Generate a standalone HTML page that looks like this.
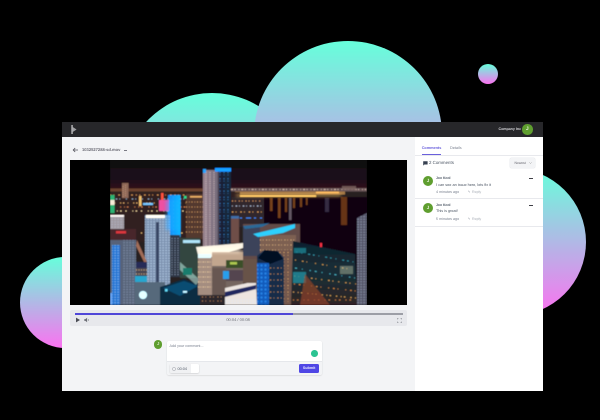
<!DOCTYPE html>
<html><head><meta charset="utf-8"><style>
html,body{margin:0;padding:0;background:#000;width:600px;height:420px;overflow:hidden;font-family:"Liberation Sans",sans-serif;text-rendering:geometricPrecision}
.a{position:absolute;white-space:nowrap}
.t{line-height:6px;height:6px}
.av{position:absolute;border-radius:50%;background:#5f9e2f;color:#e8f3dc;text-align:center;font-weight:bold}
</style></head><body>
<svg class="a" style="left:0;top:0" width="600" height="420" viewBox="0 0 600 420">
<defs>
<linearGradient id="g" x1="0" y1="0" x2="0" y2="1"><stop offset="0" stop-color="#66ffdb"/><stop offset="1" stop-color="#fb72f0"/></linearGradient>
</defs>
<circle cx="212" cy="182.4" r="89.4" fill="url(#g)"/>
<circle cx="348" cy="135" r="94" fill="url(#g)"/>
<circle cx="488" cy="74" r="10" fill="url(#g)"/>
<circle cx="65.6" cy="302.5" r="45.6" fill="url(#g)"/>
<circle cx="512.3" cy="242" r="73.7" fill="url(#g)"/>
</svg>

<div class="a" style="left:62px;top:122px;width:481px;height:269px;background:#fff"></div>
<div class="a" style="left:62px;top:137px;width:353px;height:254px;background:#f3f4f6"></div>
<div class="a" style="left:62px;top:122px;width:481px;height:15px;background:#27272a"></div>

<svg class="a" style="left:70px;top:124px" width="10" height="11" viewBox="0 0 10 11"><path d="M1.4 1h1.3v9H1.4z" fill="#c9c9cb"/><path d="M2.7 3 6.6 5.5 2.7 8z" fill="#a0a0a3"/></svg>
<div class="a t" style="left:498.5px;top:126px;font-size:3.6px;font-weight:bold;color:#d8d8dc">Company Inc</div>
<div class="av" style="left:522px;top:124px;width:10.5px;height:10.5px;font-size:5px;line-height:10.5px">J</div>

<svg class="a" style="left:72px;top:147px" width="7" height="6" viewBox="0 0 7 6"><path d="M6 3H1.2M3.2 1 1.2 3l2 2" stroke="#52525b" stroke-width=".8" fill="none"/></svg>
<div class="a t" style="left:82px;top:147px;font-size:4.1px;color:#6b6b75;font-weight:bold">1032527288-sd.mov</div>
<div class="a" style="left:123.5px;top:149.5px;width:3.5px;height:.8px;background:#7a7a84"></div>

<!-- player -->
<div class="a" style="left:70px;top:160px;width:337px;height:145px;background:#000"></div>
<svg class="a" style="left:110px;top:160px;filter:brightness(1.14) saturate(1.1)" width="257" height="145" viewBox="110 160 257 145">
<defs>
<filter id="b" x="-5%" y="-5%" width="110%" height="110%"><feGaussianBlur stdDeviation=".6"/></filter>
<filter id="b2" x="-20%" y="-20%" width="140%" height="140%"><feGaussianBlur stdDeviation="1.5"/></filter>
<linearGradient id="sky" x1="0" y1="0" x2="0" y2="1"><stop offset="0" stop-color="#0c0710"/><stop offset=".7" stop-color="#1a0a14"/><stop offset="1" stop-color="#2a1016"/></linearGradient>
<linearGradient id="blue" x1="0" y1="0" x2="1" y2="0"><stop offset="0" stop-color="#1f76c8"/><stop offset="1" stop-color="#12a0e0"/></linearGradient>
<linearGradient id="twr" x1="0" y1="0" x2="1" y2="0"><stop offset="0" stop-color="#87757e"/><stop offset=".5" stop-color="#68606c"/><stop offset=".6" stop-color="#1a1c2c"/><stop offset="1" stop-color="#182434"/></linearGradient>
<linearGradient id="glass" x1="0" y1="0" x2="0" y2="1"><stop offset="0" stop-color="#101e28"/><stop offset=".5" stop-color="#14282f"/><stop offset="1" stop-color="#2a1f20"/></linearGradient>
<pattern id="w2" width="3" height="2.6" patternUnits="userSpaceOnUse"><rect x=".3" y=".3" width="1.6" height="1.2" fill="#bcd0e6"/></pattern>
<pattern id="w4" width="4" height="4" patternUnits="userSpaceOnUse"><rect x=".5" y=".5" width="2" height="2" fill="#2f8fe0"/></pattern>
</defs>
<g filter="url(#b)">
<rect x="110" y="160" width="257" height="145" fill="#231a1e"/>
<rect x="110" y="160" width="257" height="29" fill="url(#sky)"/>
<!-- water -->
<rect x="262" y="197" width="105" height="60" fill="#0b0510"/>
<path d="M300 241 345 250 358 250 367 213V300H300z" fill="#0b0510"/>
<!-- skyline -->
<rect x="110" y="188.5" width="95" height="3" fill="#5c3a2a"/>
<rect x="231" y="188" width="136" height="3.5" fill="#5a4a4c"/>
<rect x="235" y="191.5" width="110" height="3" fill="#8d6a42"/>
<path d="M231 189.5H366" stroke="#e0c8b8" stroke-width=".8" stroke-dasharray="2 1.5 1 3 .8 2"/>
<path d="M236 196H316" stroke="#f4c46c" stroke-width="1.6"/>
<path d="M316 192.5H339" stroke="#eab060" stroke-width="1.6"/>
<rect x="342" y="186" width="14" height="4" fill="#6e5a58" opacity=".8"/>
<!-- reflections -->
<g fill="#b0662a" opacity=".55">
<rect x="270" y="198" width="2.5" height="13"/><rect x="278" y="198" width="2.5" height="20"/><rect x="285" y="198" width="2" height="14"/>
<rect x="293" y="198" width="2" height="10"/><rect x="300" y="198" width="2" height="9"/><rect x="306" y="198" width="1.5" height="7"/>
</g>
<rect x="289" y="198" width="2.5" height="22" fill="#8a7e86" opacity=".6"/>
<rect x="341" y="197" width="6" height="28" fill="#8a4a1c" opacity=".6"/>
<rect x="325" y="198" width="4" height="14" fill="#3c3448" opacity=".7"/>
<!-- mid-city fill -->
<rect x="110" y="192" width="130" height="50" fill="#2b1e1f"/>
<rect x="232" y="197" width="32" height="30" fill="#2c2226"/>
<g fill="none" stroke-width=".9">
<path d="M110 195H200" stroke="#c89058" stroke-dasharray="1 2.6 .7 4 1.6 3"/>
<path d="M110 199H200" stroke="#8fa8c0" stroke-dasharray=".8 5 1.4 2.2 .6 6"/>
<path d="M110 203H200" stroke="#e0b070" stroke-dasharray="1.2 3.4 .6 5 .9 2"/>
<path d="M110 207H200" stroke="#c07850" stroke-dasharray=".7 2 1.5 6 .8 3.2"/>
<path d="M110 211H200" stroke="#e8d0a0" stroke-dasharray="1 6 .7 2.5 1.3 4"/>
<path d="M110 233H240" stroke="#e0b878" stroke-dasharray="1 3 .7 4.4 1.4 5"/>
<path d="M232 201H262" stroke="#c89060" stroke-dasharray="1 2 .8 3"/>
<path d="M232 206H262" stroke="#a8b4c8" stroke-dasharray=".7 3 1.4 2"/>
<path d="M232 212H262" stroke="#d8a060" stroke-dasharray="1.3 2.4 .7 4"/>
<path d="M232 218H262" stroke="#3c7cd8" stroke-dasharray="5 3 2 4"/>
</g>
<rect x="122" y="183" width="6.5" height="15" fill="#7a5c50"/>
<path d="M123 186V197M125.5 185V197" stroke="#c8a080" stroke-width=".5" stroke-dasharray="1 1"/>
<rect x="110" y="195" width="4.5" height="18" fill="#2f9a68"/>
<rect x="110" y="200" width="4.5" height="5" fill="#d8d0c0"/>
<rect x="139" y="196" width="2.5" height="10" fill="#d0a868"/>
<rect x="143" y="203" width="10" height="2" fill="#6fb0e0"/>
<rect x="186" y="194" width="17" height="45" fill="#46302a"/>
<rect x="190" y="196" width="12" height="1.6" fill="#cf9d60"/>
<path d="M186 202H203M186 207H203M186 212H203M186 217H203M186 222H203M186 227H203M186 232H203" stroke="#d8a468" stroke-width=".8" stroke-dasharray="1 2 .7 1.8"/>
<!-- blue tower -->
<rect x="168" y="195" width="12.5" height="42" fill="url(#blue)"/>
<rect x="168" y="195" width="12.5" height="42" fill="url(#w4)" opacity=".3"/>
<rect x="159" y="200" width="10" height="11" fill="#c8488a"/>
<rect x="161" y="193" width="2.5" height="7" fill="#d84c3a"/>
<rect x="184" y="196" width="2.5" height="2.5" fill="#30c080"/>
<!-- main tower -->
<rect x="203" y="170" width="28" height="79" fill="url(#twr)"/>
<path d="M206 172V248M210 172V248M214 172V248" stroke="#c0b0b0" stroke-width=".7" stroke-dasharray="1.2 1"/>
<path d="M220 172V248M224 172V248M228 172V248" stroke="#3a80c0" stroke-width=".8" stroke-dasharray="1 1.6 .6 3"/>
<rect x="215" y="168" width="16" height="3.6" fill="#1c8cf0"/>
<rect x="203" y="169" width="3" height="4" fill="#2a90d8"/>
<rect x="231" y="216" width="8" height="27" fill="#5f443f"/>
<rect x="231" y="216" width="8" height="2.6" fill="#3a6090"/>
<!-- low left -->
<rect x="110" y="215" width="14" height="15" fill="#8c868c"/>
<rect x="110" y="215" width="14" height="1.8" fill="#ece4e0"/>
<rect x="110" y="215" width="14" height="15" fill="url(#w2)" opacity=".3"/>
<rect x="110" y="229" width="26" height="11" fill="#3e2228"/>
<rect x="116" y="231" width="10" height="2.5" fill="#b83038"/>
<!-- left tower 2 -->
<rect x="145" y="215" width="25" height="70" fill="#6e7f96"/>
<rect x="145" y="215" width="25" height="70" fill="url(#w2)" opacity=".6"/>
<rect x="156" y="222" width="3" height="60" fill="#323e54"/>
<rect x="146" y="215" width="19" height="3" fill="#f4eee0"/>
<rect x="170" y="235" width="10" height="42" fill="#2a303c"/>
<path d="M172 238V276M175 238V276M178 238V276" stroke="#a0b4c8" stroke-width=".6" stroke-dasharray="1 1.4"/>
<!-- far left -->
<rect x="110" y="240" width="26" height="65" fill="#4d5668"/>
<rect x="112" y="245" width="8" height="60" fill="#2264b0"/>
<rect x="112" y="245" width="8" height="60" fill="url(#w2)" opacity=".5"/>
<rect x="122" y="240" width="14" height="65" fill="url(#w2)" opacity=".3"/>
<rect x="136" y="262" width="11" height="43" fill="#403c46"/>
<rect x="136" y="262" width="11" height="6" fill="#222648"/>
<path d="M136 270H147M136 274H147M136 278H147" stroke="#d0b080" stroke-width=".8" stroke-dasharray="1 1.5"/>
<path d="M137 240 147 262H144L136 246z" fill="#8a6050"/>
<rect x="135" y="282" width="30" height="23" fill="#4e5c6a"/>
<rect x="135" y="276" width="12" height="6" fill="#2a90b0"/>
<circle cx="143" cy="295" r="4" fill="#cdf4fb"/>
<rect x="110" y="293" width="2" height="12" fill="#6090d0"/>
<!-- dome -->
<path d="M160 287 184 279 200 285 200 305H160z" fill="#0c2638"/>
<path d="M163 288 184 281 198 286 180 296z" fill="#0f4260"/>
<rect x="183" y="291" width="4" height="1.8" fill="#bfe8f8"/>
<rect x="165" y="289" width="2.5" height="2.5" fill="#60c0d8"/>
<rect x="200" y="288" width="25" height="17" fill="#262228"/>
<path d="M202 292H224M202 297H224M202 301H224" stroke="#c89060" stroke-width=".7" stroke-dasharray="1 2.4 .7 3.6"/>
<!-- central podium -->
<rect x="180" y="238" width="20" height="40" fill="#2e3c38"/>
<path d="M180 262 200 280 196 285 180 270z" fill="#a0c8c0" opacity=".6"/>
<rect x="183" y="268" width="9" height="7" fill="#1a6c5e"/>
<rect x="183" y="240" width="17" height="3" fill="#9ec8d8"/>
<rect x="198" y="250" width="45" height="45" fill="#665a54"/>
<rect x="198" y="255" width="14" height="40" fill="#8e7c72"/>
<path d="M198 262H212M198 267H212M198 272H212M198 277H212M198 282H212M198 287H212" stroke="#e0c498" stroke-width=".8" stroke-dasharray="1.4 1 .8 1.4"/>
<path d="M196 247 243 243V248L212 257 198 255z" fill="#ddd8cc"/>
<rect x="198" y="254" width="13" height="4" fill="#cfe8ec"/>
<rect x="212" y="252" width="31" height="14" fill="#a8927f"/>
<rect x="226" y="260" width="17" height="8" fill="#344428"/>
<rect x="212" y="268" width="14" height="27" fill="#5a4e4a"/>
<rect x="226" y="270" width="17" height="11" fill="#4a3e44"/>
<rect x="223" y="271" width="6" height="8" fill="#2a8ac8"/>
<rect x="230" y="262" width="7" height="2.5" fill="#9ab050"/>
<!-- bottom white building -->
<path d="M225 288 256 281 257 305H225z" fill="#cfc9c5"/>
<path d="M225 292 256 285V289L225 297z" fill="#1b2350"/>
<rect x="225" y="298" width="32" height="7" fill="url(#w2)" opacity=".45"/>
<!-- right mid block -->
<rect x="243" y="224" width="57" height="35" fill="#54423f"/>
<rect x="243" y="226" width="17" height="30" fill="#343a4e"/>
<rect x="260" y="235" width="36" height="40" fill="#6c5448"/>
<path d="M260 240H296M260 245H296M260 250H296M260 255H296M260 260H296M260 265H296M260 270H296" stroke="#e0b888" stroke-width=".8" stroke-dasharray="1 1.8 .7 2.6"/>
<path d="M243 226 270 223 262 227 245 229z" fill="#2a5c80"/>
<path d="M253 234 295 224V228L283 233 258 237z" fill="#30b4d8"/>
<rect x="276" y="250" width="16" height="55" fill="#644e44"/>
<path d="M284 252V304M288 252V304M280 252V304" stroke="#e0b070" stroke-width=".7" stroke-dasharray="1 2 .6 3"/>
<rect x="243" y="259" width="15" height="24" fill="#5a483f"/>
<!-- blue dark tower -->
<path d="M257 256 264 250 278 251 284 258V305H257z" fill="#14283e"/>
<path d="M258 258 265 250 277 251 283 259 270 264z" fill="#050a1c"/>
<rect x="257" y="263" width="12" height="42" fill="#184f9c"/>
<rect x="257" y="263" width="12" height="42" fill="url(#w4)" opacity=".55"/>
<path d="M270 268H284M270 274H284M270 280H284M270 286H284M270 292H284M270 298H284" stroke="#d89858" stroke-width=".8" stroke-dasharray="1.2 2.4 .7 3"/>
<!-- big glass -->
<path d="M293 241 355 254 357 305H291z" fill="url(#glass)"/>
<g fill="none" stroke-width=".8">
<path d="M296 252 354 262" stroke="#3c98a8" stroke-dasharray="1.5 4 .8 6 2 3"/>
<path d="M295 260 355 270" stroke="#e0a858" stroke-dasharray="1 6 1.6 3 .7 8"/>
<path d="M295 268 355 278" stroke="#58b8c8" stroke-dasharray="2 5 .8 7 1.2 4"/>
<path d="M294 276 356 284" stroke="#f0b060" stroke-dasharray="1.4 3 .8 5 1 6"/>
<path d="M294 284 356 291" stroke="#e89848" stroke-dasharray=".9 4 1.6 3 .7 7"/>
<path d="M293 292 356 298" stroke="#f0b868" stroke-dasharray="1.2 3.6 .8 2.4 1.4 5"/>
<path d="M293 300H356" stroke="#d88848" stroke-dasharray="1 3 1.5 5"/>
</g>
<rect x="294" y="248" width="12" height="5" fill="#206e7c" opacity=".8"/>
<rect x="293" y="272" width="13" height="11" fill="#267c88" opacity=".8"/>
<path d="M305 274 330 305H300z" fill="#7e3e28" opacity=".65"/>
<rect x="340" y="266" width="13" height="8" fill="#a8ac94" opacity=".45"/>
<rect x="320" y="243" width="2" height="4" fill="#d03040"/>
<!-- right edge -->
<path d="M357 218 367 213V305H357z" fill="#4a4a58"/>
<path d="M357 218 367 213V305H357z" fill="url(#w2)" opacity=".4"/>
</g>
<g filter="url(#b2)" opacity=".4">
<rect x="236" y="194" width="105" height="3" fill="#ffcf70"/>
<rect x="166" y="200" width="14" height="30" fill="#1aa0ff"/>
<rect x="200" y="248" width="40" height="5" fill="#fff4e0"/>
</g>
</svg>

<!-- controls -->
<div class="a" style="left:70px;top:309.5px;width:337px;height:16.5px;background:#e7e8ec;border-radius:2px"></div>
<div class="a" style="left:74.5px;top:312.8px;width:328px;height:2.2px;background:#9c9ea6"></div>
<div class="a" style="left:74.5px;top:312.8px;width:218.5px;height:2.2px;background:#4f46d8"></div>
<svg class="a" style="left:75px;top:317px" width="16" height="6" viewBox="0 0 16 6"><path d="M1 .6 5 3 1 5.4z" fill="#4b4d55"/><path d="M9.3 2.1h1.1l1.7-1.4v4.6L10.4 3.9H9.3z" fill="#6b6d75"/><path d="M13 2c.5.6.5 1.4 0 2" stroke="#6b6d75" stroke-width=".5" fill="none"/></svg>
<div class="a t" style="left:198px;width:80px;text-align:center;top:317px;font-size:4px;color:#6a6c74">00:04 / 00:08</div>
<svg class="a" style="left:396.5px;top:317.5px" width="5" height="5" viewBox="0 0 5 5"><path d="M.3 1.5V.3h1.2M3.5.3h1.2v1.2M4.7 3.5v1.2H3.5M1.5 4.7H.3V3.5" stroke="#85878f" stroke-width=".5" fill="none"/></svg>

<!-- composer -->
<div class="av" style="left:154px;top:340.3px;width:8.4px;height:8.4px;font-size:4px;line-height:8.4px">J</div>
<div class="a" style="left:166.7px;top:340.7px;width:155.6px;height:34.3px;background:#fff;border-radius:2px;box-shadow:0 .5px 1.5px rgba(0,0,0,.14)"></div>
<div class="a" style="left:166.7px;top:361px;width:155.6px;height:14px;background:#f3f4f6;border-radius:0 0 2px 2px;border-top:.5px solid #e5e7eb;box-sizing:border-box"></div>
<div class="a t" style="left:169.5px;top:343px;font-size:3.7px;color:#7b8290">Add your comment...</div>
<div class="a" style="left:311px;top:350.4px;width:6.6px;height:6.6px;border-radius:50%;background:#2cc392"></div>
<div class="a" style="left:170px;top:364px;width:29.3px;height:9.3px;background:#fff;border-radius:1.5px;box-shadow:0 .5px 1.5px rgba(0,0,0,.18)"></div>
<div class="a" style="left:170px;top:364px;width:20.7px;height:9.3px;background:#f0f1f3;border-radius:1.5px 0 0 1.5px"></div>
<svg class="a" style="left:172.3px;top:366.5px" width="4" height="4" viewBox="0 0 4 4"><circle cx="2" cy="2" r="1.6" fill="none" stroke="#9a9ca4" stroke-width=".5"/></svg>
<div class="a t" style="left:177.5px;top:365.7px;font-size:3.8px;color:#5b6370">00:04</div>
<div class="a" style="left:299px;top:363.7px;width:20.3px;height:9.6px;background:#4f46e5;border-radius:1.5px;color:#e8e8ff;font-size:3.7px;font-weight:bold;line-height:9.6px;text-align:center">Submit</div>

<!-- right panel -->
<div class="a t" style="left:421.7px;top:145px;font-size:3.8px;color:#6a60dc;font-weight:bold">Comments</div>
<div class="a t" style="left:450px;top:145px;font-size:3.8px;color:#7b8290">Details</div>
<div class="a" style="left:415px;top:154.8px;width:128px;height:.5px;background:#e8e9ed"></div>
<div class="a" style="left:421.5px;top:154px;width:19.5px;height:.8px;background:#6a60dc"></div>
<svg class="a" style="left:423px;top:160.5px" width="5" height="5" viewBox="0 0 5 5"><path d="M.2.3h4.4v3.2H1.4L.2 4.6z" fill="#374151"/></svg>
<div class="a t" style="left:429px;top:160px;font-size:4.4px;color:#4b5563">2 Comments</div>
<div class="a" style="left:510px;top:158px;width:25px;height:10px;background:#f3f4f6;border-radius:1.5px;box-shadow:0 0 0 .4px #e5e7eb"></div>
<div class="a t" style="left:514.5px;top:160px;font-size:3.4px;color:#62626b">Newest</div>
<svg class="a" style="left:529px;top:162px" width="3" height="2" viewBox="0 0 3 2"><path d="M.3.3 1.5 1.5 2.7.3" stroke="#888" stroke-width=".4" fill="none"/></svg>

<div class="av" style="left:423px;top:176px;width:10px;height:10px;font-size:4.6px;line-height:10px">J</div>
<div class="a t" style="left:436px;top:175.4px;font-size:3.4px;font-weight:bold;color:#4b5563">Jon Kool</div>
<div class="a t" style="left:436px;top:181.5px;font-size:3.8px;color:#4b5563">I can see an issue here, lets fix it</div>
<div class="a t" style="left:436px;top:189px;font-size:3.7px;color:#7b8290">4 minutes ago</div>
<div class="a t" style="left:467.5px;top:189px;font-size:3.6px;color:#a8adb6">↰</div>
<div class="a t" style="left:472px;top:189px;font-size:3.6px;color:#a8adb6">Reply</div>
<div class="a" style="left:529px;top:178.4px;width:3.6px;height:.9px;background:#3f3f46"></div>
<div class="a" style="left:415px;top:198.3px;width:128px;height:.5px;background:#e8e9ed"></div>

<div class="av" style="left:423px;top:202.7px;width:10px;height:10px;font-size:4.6px;line-height:10px">J</div>
<div class="a t" style="left:436px;top:202.4px;font-size:3.4px;font-weight:bold;color:#4b5563">Jon Kool</div>
<div class="a t" style="left:436px;top:208.3px;font-size:3.8px;color:#4b5563">This is great!</div>
<div class="a t" style="left:436px;top:215.7px;font-size:3.7px;color:#7b8290">5 minutes ago</div>
<div class="a t" style="left:467.5px;top:215.7px;font-size:3.6px;color:#a8adb6">↰</div>
<div class="a t" style="left:472px;top:215.7px;font-size:3.6px;color:#a8adb6">Reply</div>
<div class="a" style="left:529px;top:205.4px;width:3.6px;height:.9px;background:#3f3f46"></div>
<div class="a" style="left:415px;top:225.7px;width:128px;height:.5px;background:#e8e9ed"></div>
</body></html>
